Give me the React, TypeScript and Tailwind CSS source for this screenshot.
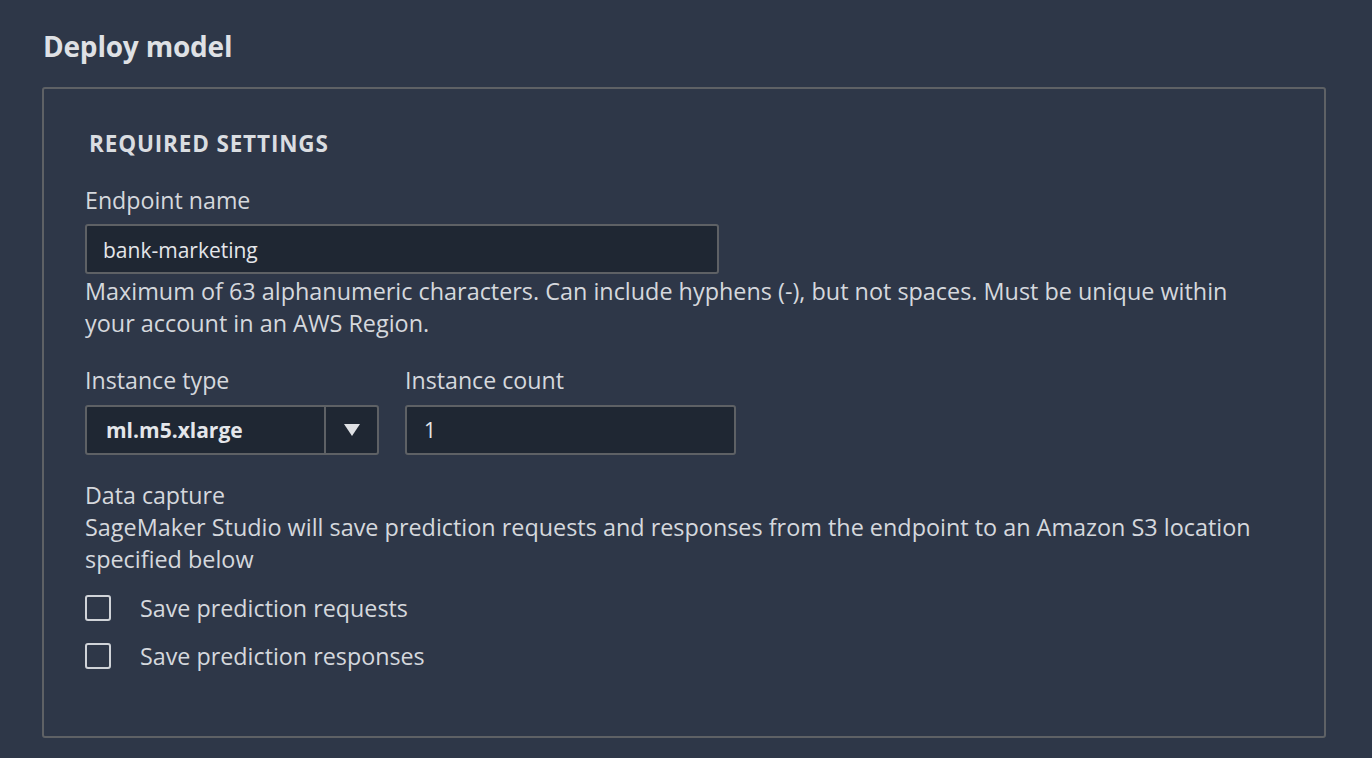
import React from "react";

export default function App() {
  return (
    <div
      className="w-[1372px] h-[758px] bg-[#2e3748] text-[#d5d8dd] overflow-hidden"
      style={{ fontFamily: '"Open Sans", "Noto Sans", sans-serif' }}
    >
      <div className="pl-[42px] pr-[46px] pt-[27px]">
        <h1 className="text-[28px] leading-[38px] font-bold text-[#dfe1e5] pl-[1px] tracking-[-0.2px]">Deploy model</h1>
        <div className="mt-[22px] border-2 border-[#5e6165] rounded-[3px] h-[651px] pl-[41px] pr-[40px] pt-[40px]">
          <div className="text-[22.5px] leading-[30px] font-bold tracking-[0.85px] pl-[4px] text-[#dadde1]">REQUIRED SETTINGS</div>
          <div className="mt-[26px] text-[23.2px] leading-[30px]">Endpoint name</div>
          <div className="mt-[9px] w-[634px] h-[50px] bg-[#1f2733] border-2 border-[#5e6165] rounded-[3px] flex items-center pl-[16px] pt-[3px] text-[21px] text-[#e4e6ea]">
            bank-marketing
          </div>
          <div className="mt-[1px] text-[23.4px] leading-[32px] whitespace-nowrap">
            Maximum of 63 alphanumeric characters. Can include hyphens (-), but not spaces. Must be unique within
            <br />
            your account in an AWS Region.
          </div>
          <div className="mt-[26px] flex gap-[26px]">
            <div className="flex flex-col">
              <div className="text-[23.2px] leading-[30px]">Instance type</div>
              <div className="mt-[10px] w-[294px] h-[50px] bg-[#1f2733] border-2 border-[#5e6165] rounded-[3px] flex">
                <div className="flex-1 flex items-center pl-[19px] pt-[2px] text-[21px] font-bold text-[#e4e6ea]">ml.m5.xlarge</div>
                <div className="w-[53px] border-l-2 border-[#5e6165] flex items-center justify-center">
                  <svg width="18" height="14" viewBox="0 0 18 14">
                    <polygon points="1,1 17,1 9,13" fill="#dfe1e5" />
                  </svg>
                </div>
              </div>
            </div>
            <div className="flex flex-col">
              <div className="text-[23.2px] leading-[30px]">Instance count</div>
              <div className="mt-[10px] w-[331px] h-[50px] bg-[#1f2733] border-2 border-[#5e6165] rounded-[3px] flex items-center pl-[17px] pt-[2px] text-[21px] text-[#e4e6ea]">
                1
              </div>
            </div>
          </div>
          <div className="mt-[24px] text-[23.2px] leading-[32px]">Data capture</div>
          <div className="text-[23.4px] leading-[32px] whitespace-nowrap">
            SageMaker Studio will save prediction requests and responses from the endpoint to an Amazon S3 location
            <br />
            specified below
          </div>
          <div className="mt-[20px] flex flex-col gap-[22px]">
            <label className="flex items-center gap-[29px]">
              <span className="w-[26px] h-[26px] border-2 border-[#d0d3d8] rounded-[3px]" />
              <span className="text-[23.3px] leading-[26px]">Save prediction requests</span>
            </label>
            <label className="flex items-center gap-[29px]">
              <span className="w-[26px] h-[26px] border-2 border-[#d0d3d8] rounded-[3px]" />
              <span className="text-[23.3px] leading-[26px]">Save prediction responses</span>
            </label>
          </div>
        </div>
      </div>
    </div>
  );
}
